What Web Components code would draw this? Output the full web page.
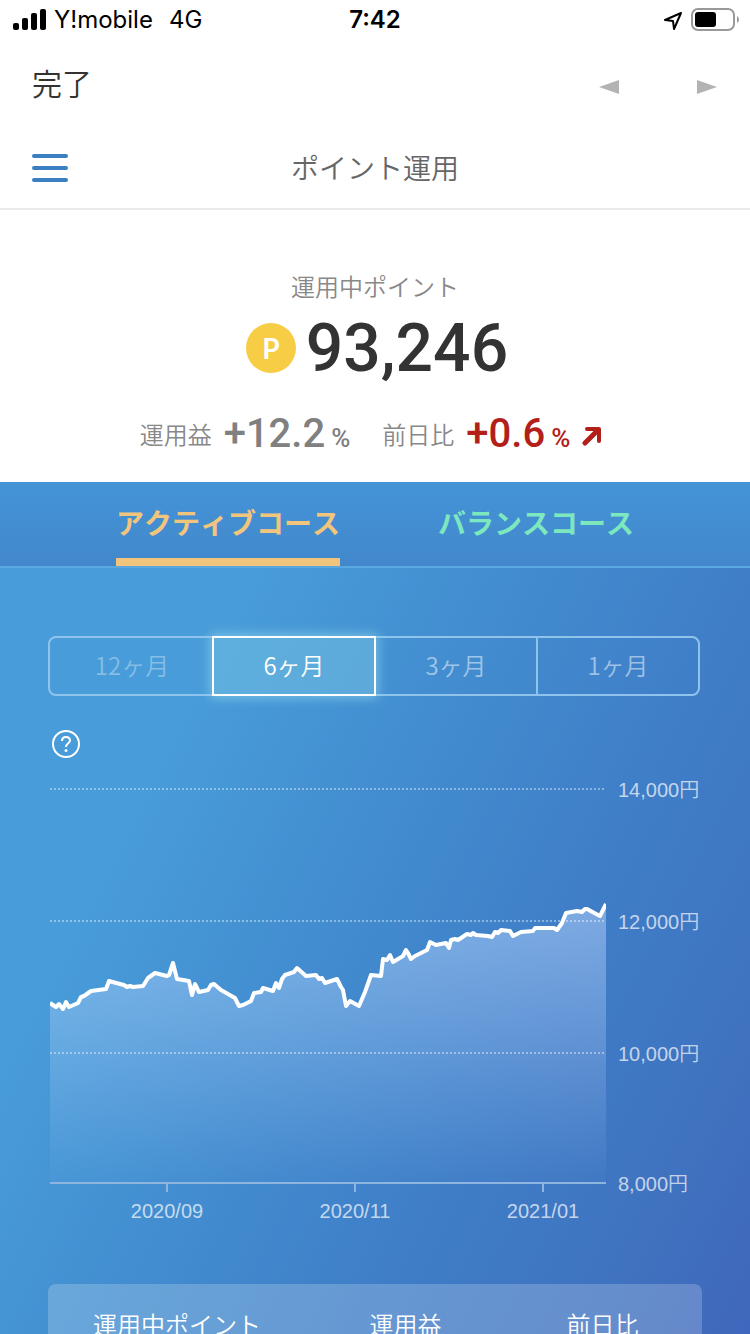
<!DOCTYPE html>
<html lang="ja">
<head>
  <meta charset="utf-8">
  <meta name="viewport" content="width=device-width, initial-scale=1">
  <title>ポイント運用</title>
  <style>
    html,
    body {
      margin: 0;
      height: 100%;
    }
    body {
      background: #fff;
      font-family: "Noto Sans CJK JP", sans-serif;
      font-kerning: none;
      overflow: hidden;
    }
  </style>
</head>
<body>
  <point-app></point-app>

  <script>
    "use strict";

    // every component sets its own template, the base class only clones it
    class BaseComponent extends HTMLElement {
      constructor() {
        super();

        const shadow = this.attachShadow({ mode: "open" });
        const template = document.createElement("template");

        template.innerHTML = `
          <style>
            *, *::before, *::after { box-sizing: border-box; }
            :host { display: block; }
            button { margin: 0; padding: 0; border: 0; background: none; color: inherit; font: inherit; font-kerning: inherit; cursor: pointer; }
            svg { display: block; }
          </style>
          ${this.template()}
        `;

        shadow.appendChild(template.content.cloneNode(true));
      }

      template() {
        return "";
      }
    }

    // carrier, clock and battery
    class StatusBar extends BaseComponent {
      template() {
        return `
          <style>
            :host {
              display: grid;
              grid-template-columns: 1fr auto 1fr;
              align-items: center;
              height: 40px;
              padding: 0 13px;
              color: #000;
              font: 400 24px/40px Inter, sans-serif;
            }
            .side { display: flex; align-items: center; gap: 8px; }
            .side--end { justify-content: flex-end; margin-right: -2px; }
            .network { margin-left: 8px; }
            .time { font-weight: 600; }
          </style>
          <div class="side">
            <svg width="33" height="22" viewBox="0 0 33 22" aria-hidden="true">
              <rect x="0" y="14" width="6" height="7" rx="2"/>
              <rect x="9" y="9" width="6" height="12" rx="2"/>
              <rect x="18" y="4" width="6" height="17" rx="2"/>
              <rect x="27" y="0" width="6" height="21" rx="2"/>
            </svg>
            <span>Y!mobile</span>
            <span class="network">4G</span>
          </div>
          <div class="time">7:42</div>
          <div class="side side--end">
            <svg width="20" height="20" viewBox="0 0 20 20" fill="none" stroke="#000" stroke-width="2" stroke-linejoin="round" aria-hidden="true">
              <path d="M2 10 L18 3 L11 19 L10 11 Z"/>
            </svg>
            <svg width="48" height="24" viewBox="0 0 48 24" aria-hidden="true">
              <rect x="1" y="1" width="42" height="21" rx="6" fill="none" stroke="#999" stroke-width="2"/>
              <rect x="4" y="4" width="21" height="15" rx="3"/>
              <path d="M46 8 Q48 9 48 12 Q48 14 46 15 Z" fill="#999"/>
            </svg>
          </div>
        `;
      }
    }

    // in-app browser controls
    class BrowserBar extends BaseComponent {
      template() {
        return `
          <style>
            :host {
              display: flex;
              align-items: center;
              height: 88px;
              padding: 0 32px;
              color: #333;
            }
            .done { margin-right: auto; padding-bottom: 4px; font-size: 30px; line-height: 44px; font-weight: 350; }
            .arrows { display: flex; gap: 76px; padding-top: 6px; }
            .arrows svg { fill: #b3b3b3; }
          </style>
          <button class="done" type="button">完了</button>
          <div class="arrows">
            <button type="button" aria-label="戻る">
              <svg width="22" height="14" viewBox="0 0 22 14"><path d="M1 7 L21 0 V14 Z"/></svg>
            </button>
            <button type="button" aria-label="進む">
              <svg width="22" height="14" viewBox="0 0 22 14"><path d="M21 7 L1 0 V14 Z"/></svg>
            </button>
          </div>
        `;
      }
    }

    class PageHeader extends BaseComponent {
      template() {
        return `
          <style>
            :host {
              display: grid;
              grid-template-columns: 36px 1fr 36px;
              align-items: center;
              height: 82px;
              padding: 0 32px;
              border-bottom: 2px solid #e8e9ea;
            }
            .menu { display: grid; gap: 8px; }
            .menu span { height: 4px; border-radius: 2px; background: #3a80c1; }
            h1 { margin: 0; padding-bottom: 2px; color: #666; font-size: 28px; line-height: 40px; font-weight: 350; text-align: center; }
          </style>
          <button class="menu" type="button" aria-label="メニュー"><span></span><span></span><span></span></button>
          <h1><slot></slot></h1>
        `;
      }
    }

    class PointsSummary extends BaseComponent {
      template() {
        return `
          <style>
            :host { padding: 60px 24px 12px; color: #888; font-weight: 350; text-align: center; }
            .label { margin: 0; font-size: 24px; line-height: 32px; }
            .total { display: flex; justify-content: center; align-items: center; gap: 10px; padding-left: 4px; }
            .coin {
              width: 50px;
              height: 50px;
              border-radius: 50%;
              background: #f8cd46;
              color: #fff;
              font: 700 28px/50px Lato, sans-serif;
            }
            .amount { padding-top: 2px; color: #333; font: 500 66px/90px Roboto, sans-serif; }
            .stats { display: flex; justify-content: center; gap: 32px; padding: 8px 8px 0 0; }
          </style>
          <p class="label">運用中ポイント</p>
          <div class="total">
            <span class="coin">P</span>
            <span class="amount">93,246</span>
          </div>
          <div class="stats"><slot></slot></div>
        `;
      }
    }

    // one rate: <rate-item label="..." value="..." up>
    class RateItem extends BaseComponent {
      template() {
        const label = this.getAttribute("label");
        const value = this.getAttribute("value");
        const arrow = this.hasAttribute("up")
          ? `<svg width="20" height="20" viewBox="0 0 20 20" fill="none" stroke="currentColor" stroke-width="5" stroke-linecap="round" stroke-linejoin="round" aria-hidden="true">
               <path d="M3 17 L15 5"/>
               <path d="M5 3 H17 V15" stroke-width="4"/>
             </svg>`
          : "";

        return `
          <style>
            :host { display: flex; align-items: center; gap: 12px; }
            .label { padding-bottom: 4px; font-size: 24px; line-height: 60px; }
            .value { display: flex; align-items: baseline; gap: 6px; color: #808080; font: 500 40px/64px Roboto, sans-serif; }
            .unit { font-size: 26px; }
            :host([up]) .value, svg { color: #b3201a; }
          </style>
          <span class="label">${label}</span>
          <span class="value"><span>${value}</span><span class="unit">%</span></span>
          ${arrow}
        `;
      }
    }

    class CourseTabs extends BaseComponent {
      template() {
        return `
          <style>
            :host {
              display: flex;
              justify-content: center;
              gap: 98px;
              border-bottom: 2px solid #5ba8e0;
              background: linear-gradient(#4594d8, #4287cb);
            }
          </style>
          <slot></slot>
        `;
      }
    }

    class CourseTab extends BaseComponent {
      template() {
        return `
          <style>
            button {
              height: 84px;
              padding-bottom: 4px;
              border-top: 8px solid transparent;
              border-bottom: 8px solid transparent;
              color: #7de8be;
              font-size: 28px;
              line-height: 64px;
              font-weight: 700;
            }
            :host([active]) button { border-bottom-color: #f2c57d; color: #f2c57d; }
          </style>
          <button type="button"><slot></slot></button>
        `;
      }
    }

    class PeriodPicker extends BaseComponent {
      template() {
        return `
          <style>
            :host {
              display: grid;
              grid-template-columns: repeat(4, 1fr);
              height: 60px;
              border: 2px solid #8fc3eb;
              border-radius: 8px;
              color: rgba(255, 255, 255, 0.5);
            }
            button {
              margin: -2px 0;
              padding-bottom: 4px;
              border-left: 2px solid #8fc3eb;
              font-size: 24px;
              font-weight: 350;
            }
            button:first-of-type { border-left-color: transparent; }
            button[disabled] { color: rgba(255, 255, 255, 0.35); }
            button[aria-pressed="true"] {
              z-index: 1;
              margin-right: -2px;
              border: 2px solid #fff;
              background: rgba(130, 205, 230, 0.4);
              box-shadow: 0 0 10px 2px rgba(150, 220, 240, 0.6);
              color: #fff;
            }
          </style>
          <button type="button" disabled>12ヶ月</button>
          <button type="button" aria-pressed="true">6ヶ月</button>
          <button type="button">3ヶ月</button>
          <button type="button">1ヶ月</button>
        `;
      }
    }

    class HelpButton extends BaseComponent {
      template() {
        return `
          <button type="button" aria-label="ヘルプ">
            <svg width="28" height="28" viewBox="0 0 28 28" fill="none" stroke="#fff" stroke-width="2">
              <circle cx="14" cy="14" r="13"/>
              <path d="M10 11 C10 8.500 11.700 7 14 7 C16.300 7 18 8.400 18 10.500 C18 13.300 14 13.500 14 17"/>
              <circle cx="14" cy="20.500" r="1.500" fill="#fff" stroke="none"/>
            </svg>
          </button>
        `;
      }
    }

    // x and y of each day, from the top left corner of the plot
    const prices = [
      [0, 215], [6, 219], [9, 216], [13, 221], [16, 214], [19, 219], [28, 215], [31, 209], [34, 208], [41, 203],
      [56, 201], [59, 193], [70, 196], [74, 197], [77, 199], [80, 198], [83, 199], [93, 198], [98, 190], [105, 185],
      [117, 188], [119, 187], [123, 175], [127, 191], [139, 193], [142, 207], [145, 196], [149, 204], [158, 202],
      [161, 197], [164, 196], [171, 202], [185, 210], [189, 218], [193, 217], [201, 213], [204, 205], [211, 204],
      [213, 200], [223, 203], [226, 195], [229, 200], [232, 191], [235, 187], [244, 184], [247, 180], [256, 188],
      [266, 187], [269, 191], [272, 190], [275, 195], [287, 191], [291, 199], [293, 202], [296, 218], [300, 213],
      [309, 218], [315, 204], [321, 187], [331, 188], [333, 171], [337, 172], [340, 167], [343, 174], [353, 168],
      [356, 162], [358, 165], [361, 171], [365, 168], [377, 162], [380, 154], [386, 157], [396, 155], [399, 160],
      [401, 152], [405, 151], [408, 152], [417, 146], [421, 147], [423, 145], [426, 147], [438, 148], [442, 149],
      [445, 144], [448, 145], [451, 142], [460, 143], [463, 148], [471, 144], [483, 143], [485, 140], [504, 140],
      [507, 142], [512, 135], [516, 125], [527, 123], [532, 124], [535, 121], [537, 121], [548, 127], [550, 128],
      [556, 116]
    ];

    class PriceChart extends BaseComponent {
      template() {
        const line = prices.map((p) => p.join(" ")).join(" L");
        const scale = [["14,000円", 1], ["12,000円", 133], ["10,000円", 265], ["8,000円", 395]];
        const months = [["2020/09", 117], ["2020/11", 305], ["2021/01", 493]];

        return `
          <style>
            svg { width: 100%; height: auto; }
            text { fill: rgba(255, 255, 255, 0.7); font: 400 20px "Liberation Sans", "Noto Sans CJK JP", sans-serif; }
            .scale text { font-weight: 350; }
            .months text { text-anchor: middle; }
            .grid { stroke: rgba(255, 255, 255, 0.4); stroke-width: 2; stroke-dasharray: 2 2; }
            .axis { stroke: #8db5e0; stroke-width: 2; }
            .line { fill: none; stroke: #fff; stroke-width: 4; stroke-linejoin: round; }
          </style>
          <svg viewBox="-2 -16 654 456" role="img" aria-label="基準価額">
            <defs>
              <linearGradient id="fade" gradientUnits="userSpaceOnUse" x1="0" y1="116" x2="0" y2="394">
                <stop offset="0" stop-color="#bfd8ff" stop-opacity="0.5"/>
                <stop offset="1" stop-color="#bfd8ff" stop-opacity="0.02"/>
              </linearGradient>
              <clipPath id="plot"><rect width="556" height="396"/></clipPath>
            </defs>
            <path d="M0 394 L${line} L556 394 Z" fill="url(#fade)"/>
            <g class="grid">
              ${scale.slice(0, 3).map(([, y]) => `<path d="M0 ${y} H555"/>`).join("")}
            </g>
            <path class="line" clip-path="url(#plot)" d="M${line}"/>
            <g class="axis">
              <path d="M0 395 H556"/>
              ${months.map(([, x]) => `<path d="M${x} 396 V404"/>`).join("")}
            </g>
            <g class="scale">${scale.map(([text, y]) => `<text x="568" y="${y + 8}">${text}</text>`).join("")}</g>
            <g class="months">${months.map(([text, x]) => `<text x="${x}" y="430">${text}</text>`).join("")}</g>
          </svg>
        `;
      }
    }

    class CourseTable extends BaseComponent {
      template() {
        return `
          <style>
            :host {
              min-height: 200px;
              border-radius: 8px;
              background: rgba(255, 255, 255, 0.2);
              color: #fff;
            }
            table { width: 100%; border-collapse: collapse; table-layout: fixed; }
            th { padding: 24px 2px 24px 0; font-size: 24px; line-height: 32px; font-weight: 350; }
            th:first-child { width: 260px; }
          </style>
          <table>
            <thead>
              <tr><th scope="col">運用中ポイント</th><th scope="col">運用益</th><th scope="col">前日比</th></tr>
            </thead>
          </table>
        `;
      }
    }

    class CoursePanel extends BaseComponent {
      template() {
        return `
          <style>
            :host {
              flex: 1 0 auto;
              padding: 68px 48px 0;
              background: linear-gradient(117deg, #489cd9 230px, #428ccf 460px, #3f7dc7 690px, #3f73c0 870px, #4063ba 1060px);
            }
            period-picker { margin-right: 2px; }
            help-button { height: 76px; padding: 34px 4px 0; }
            course-table { margin-top: 56px; }
          </style>
          <period-picker></period-picker>
          <help-button></help-button>
          <price-chart></price-chart>
          <course-table></course-table>
        `;
      }
    }

    class PointApp extends BaseComponent {
      template() {
        return `
          <style>
            :host {
              display: flex;
              flex-direction: column;
              height: 100vh;
              overflow: hidden auto;
              scrollbar-width: none;
            }
            status-bar, browser-bar, page-header, points-summary, course-tabs { flex-shrink: 0; }
          </style>
          <status-bar></status-bar>
          <browser-bar></browser-bar>
          <page-header>ポイント運用</page-header>
          <points-summary>
            <rate-item label="運用益" value="+12.2"></rate-item>
            <rate-item label="前日比" value="+0.6" up></rate-item>
          </points-summary>
          <course-tabs>
            <course-tab active>アクティブコース</course-tab>
            <course-tab>バランスコース</course-tab>
          </course-tabs>
          <course-panel></course-panel>
        `;
      }
    }

    // let the browser know about the custom elements, the app goes last
    window.customElements.define("status-bar", StatusBar);
    window.customElements.define("browser-bar", BrowserBar);
    window.customElements.define("page-header", PageHeader);
    window.customElements.define("points-summary", PointsSummary);
    window.customElements.define("rate-item", RateItem);
    window.customElements.define("course-tabs", CourseTabs);
    window.customElements.define("course-tab", CourseTab);
    window.customElements.define("period-picker", PeriodPicker);
    window.customElements.define("help-button", HelpButton);
    window.customElements.define("price-chart", PriceChart);
    window.customElements.define("course-table", CourseTable);
    window.customElements.define("course-panel", CoursePanel);
    window.customElements.define("point-app", PointApp);
  </script>
</body>
</html>
